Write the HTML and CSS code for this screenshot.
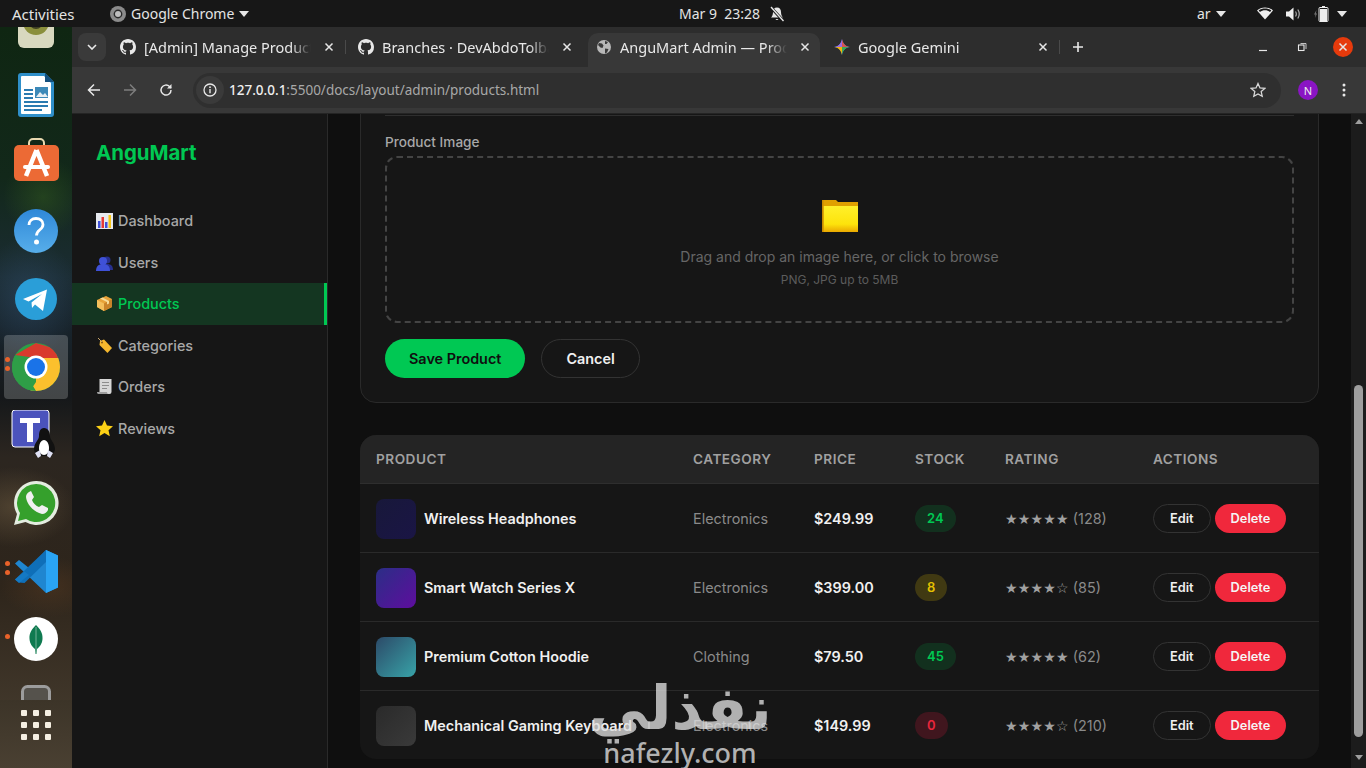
FILE: index.html
```html
<!DOCTYPE html>
<html lang="en">
<head>
    <meta charset="UTF-8">
    <meta name="viewport" content="width=device-width, initial-scale=1.0">
    <title>AnguMart Admin — Products</title>
    <link rel="stylesheet" href="styles.css">
</head>
<body>
<svg class="defs" width="0" height="0">
    <symbol id="octocat" viewBox="0 0 16 16"><path fill="#e8e8e8" d="M8 0C3.58 0 0 3.58 0 8c0 3.54 2.29 6.53 5.47 7.59.4.07.55-.17.55-.38 0-.19-.01-.82-.01-1.49-2.01.37-2.53-.49-2.69-.94-.09-.23-.48-.94-.82-1.13-.28-.15-.68-.52-.01-.53.63-.01 1.08.58 1.23.82.72 1.21 1.87.87 2.33.66.07-.52.28-.87.51-1.07-1.78-.2-3.64-.89-3.64-3.95 0-.87.31-1.59.82-2.15-.08-.2-.36-1.02.08-2.12 0 0 .67-.21 2.2.82.64-.18 1.32-.27 2-.27.68 0 1.36.09 2 .27 1.53-1.04 2.2-.82 2.2-.82.44 1.1.16 1.92.08 2.12.51.56.82 1.27.82 2.15 0 3.07-1.87 3.75-3.65 3.95.29.25.54.73.54 1.48 0 1.07-.01 1.93-.01 2.2 0 .21.15.46.55.38A8.013 8.013 0 0016 8c0-4.42-3.58-8-8-8z"/></symbol>
    <symbol id="close-x" viewBox="0 0 10 10"><path d="M1.500 1.500l7 7M8.500 1.500l-7 7" stroke="#e6e6e6" stroke-width="1.500" fill="none"/></symbol>
    <symbol id="caret" viewBox="0 0 10 6"><path d="M0 0h10L5 6z" fill="#e6e6e6"/></symbol>
</svg>

<div class="screen">
    <!-- gnome top bar -->
    <header class="topbar">
        <span class="tb-activities">Activities</span>
        <span class="tb-app">
            <svg width="16" height="16" viewBox="0 0 16 16"><circle cx="8" cy="8" r="8" fill="#8b8b8b"/><circle cx="8" cy="8" r="4.400" fill="#2a2a2a"/><circle cx="8" cy="8" r="3" fill="#bdbdbd"/></svg>
            Google Chrome
            <svg class="tb-caret" width="10" height="6"><use href="#caret"/></svg>
        </span>
        <span class="tb-clock">Mar 9&nbsp; 23:28</span>
        <svg class="tb-bell" width="16" height="16" viewBox="0 0 16 16"><path d="M8 1.500c-2.600 0-4 2-4 4.400 0 3-1 4.400-2 5.600h12c-1-1.200-2-2.600-2-5.600 0-2.400-1.400-4.400-4-4.400zM6.500 13a1.600 1.600 0 003 0z" fill="#e6e6e6"/><path d="M2 1.500l12 13" stroke="#171717" stroke-width="3"/><path d="M2 1l12.500 14" stroke="#e6e6e6" stroke-width="1.400"/></svg>
        <span class="tb-lang">ar <svg class="tb-caret" width="10" height="6"><use href="#caret"/></svg></span>
        <svg class="tb-wifi" width="16" height="13" viewBox="0 0 16 13"><path d="M8 12.500L0 3.500C2 1.500 5 .5 8 .5s6 1 8 3z" fill="#eee"/><path d="M1.600 3.600C3.400 2.200 5.600 1.600 8 1.600s4.600.6 6.400 2L13 5C11.600 3.900 9.900 3.300 8 3.300S4.400 3.900 3 5z" fill="#171717"/></svg>
        <svg class="tb-sound" width="15" height="14" viewBox="0 0 15 14"><path d="M0 4.500h3L7.500.5v13L3 9.500H0z" fill="#eee"/><path d="M9.500 4.500c1 1.500 1 3.500 0 5M11.800 2.500c1.800 2.800 1.800 6.200 0 9" stroke="#aaa" stroke-width="1.200" fill="none"/></svg>
        <svg class="tb-battery" width="15" height="16" viewBox="0 0 15 16"><path d="M2.500 4L0 8.500h1.500L1 12l2-4.500H1.800z" fill="#777"/><rect x="5" y="1.500" width="9" height="14" rx="1" fill="none" stroke="#eee" stroke-width="1"/><rect x="8" y="0" width="3" height="2" fill="#eee"/><rect x="6" y="3" width="7" height="12" fill="#eee"/></svg>
        <svg class="tb-caret tb-caret-last" width="10" height="6"><use href="#caret"/></svg>
    </header>

    <div class="desk">
        <!-- ubuntu dock -->
        <nav class="dock">
            <div class="dock-list">
                <div class="dock-slot">
                    <svg width="36" height="42" viewBox="0 0 36 42"><rect x="0" y="0" width="36" height="42" rx="6" fill="#d8d8bf"/><circle cx="18" cy="16" r="13" fill="#8a8f3c"/><circle cx="18" cy="16" r="7" fill="#3d3f22"/></svg>
                </div>
                <div class="dock-slot">
                    <svg width="36" height="44" viewBox="0 0 36 44"><path d="M3 0h24l9 9v32a3 3 0 01-3 3H3a3 3 0 01-3-3V3a3 3 0 013-3z" fill="#2f8fc9"/><path d="M4 3h22l7 7v30a1 1 0 01-1 1H4a1 1 0 01-1-1V4a1 1 0 011-1z" fill="#fff"/><path d="M27 0l9 9h-9z" fill="#14507e"/><path d="M6 17h9M6 21h9M6 25h9M6 29h24M6 33h24M6 37h18" stroke="#2a7ab0" stroke-width="2"/><rect x="17" y="14" width="13" height="11" fill="#3d89b8"/><path d="M18 24l4-5 3 3 2-2 3 4z" fill="#e9eef2"/></svg>
                </div>
                <div class="dock-slot">
                    <svg class="dock-bag" width="45" height="44" viewBox="0 0 45 44"><path d="M15 8V5a4 4 0 014-4h7a4 4 0 014 4v3" stroke="#e8d9b0" stroke-width="2" fill="none"/><rect x="0" y="7" width="45" height="36" rx="5" fill="#ec6a35"/><path d="M22.500 12L12 38M22.500 12L33 38" stroke="#fff" stroke-width="4.500"/><rect x="9" y="27" width="27" height="4" rx="2" fill="#fff"/></svg>
                </div>
                <div class="dock-slot">
                    <svg width="44" height="44" viewBox="0 0 44 44"><defs><linearGradient id="helpg" x1="0" y1="0" x2="0" y2="1"><stop offset="0" stop-color="#2f88d8"/><stop offset="1" stop-color="#57aeea"/></linearGradient></defs><circle cx="22" cy="22" r="22" fill="url(#helpg)"/><path d="M15 16c0-4 3-6.500 7-6.500s7 2.500 7 6c0 5.500-6.500 5-6.500 11" stroke="#fff" stroke-width="2.800" fill="none"/><circle cx="22.500" cy="33" r="2.500" fill="#fff"/></svg>
                </div>
                <div class="dock-slot">
                    <svg width="42" height="42" viewBox="0 0 42 42"><circle cx="21" cy="21" r="21" fill="#2a9ed8"/><path d="M8 21L32 11.500 28 33 20 26.500 17 30 16.500 24.500 27 16 13.500 23.500z" fill="#fff"/></svg>
                </div>
                <div class="dock-slot dock-active">
                    <i class="run-dot"></i><i class="run-dot"></i>
                    <svg width="48" height="48" viewBox="0 0 48 48"><defs><clipPath id="chromeclip"><circle cx="24" cy="24" r="24"/></clipPath></defs><g clip-path="url(#chromeclip)"><rect width="48" height="48" fill="#2e9e47"/><path d="M3 12L24 0l20 6 4 18-24-9z" fill="#d93a2d"/><path d="M24 15h24v33H18l6-9z" fill="#fbc02d"/><path d="M3 12l12 21 9 15H0V12z" fill="#2e9e47"/></g><circle cx="24" cy="24" r="11.500" fill="#fff"/><circle cx="24" cy="24" r="9" fill="#1a73e8"/></svg>
                </div>
                <div class="dock-slot">
                    <svg width="50" height="50" viewBox="0 0 50 50"><rect x="1" y="0" width="37" height="37" rx="3" fill="#4b53bc" stroke="#fff" stroke-width="1"/><path d="M9 8h20v5h-7v19h-6V13H9z" fill="#fff"/><path d="M33 18c-4 0-5 4-5 8 0 4-5 7-5 13 0 5 5 7 10 7s11-2 11-7c0-6-5-9-5-13 0-4-2-8-6-8z" fill="#111"/><path d="M33 30c-3 0-5 4-5 8s2 7 5 7 5-3 5-7-2-8-5-8z" fill="#fff"/><path d="M24 43l5-3 1 6-3 2zM42 43l-5-3-1 6 3 2z" fill="#dfe1f5"/></svg>
                </div>
                <div class="dock-slot">
                    <svg width="46" height="46" viewBox="0 0 46 46"><path d="M23 1a22 22 0 00-19 33L1 45l11.500-3A22 22 0 1023 1z" fill="#e4ece0"/><path d="M23 4a19 19 0 00-16 29l-2 8 8-2a19 19 0 1010-35z" fill="#35a02c"/><path d="M16 12c-2 1-3 3-3 5 1 8 8 15 16 17 3 0 5-2 6-4v-2l-6-3-3 2c-3-1-6-4-7-7l2-3-3-6z" fill="#f0f0f0"/></svg>
                </div>
                <div class="dock-slot">
                    <i class="run-dot"></i><i class="run-dot"></i>
                    <svg width="43" height="43" viewBox="0 0 43 43"><path d="M31 0l12 5.500v32L31 43 0 13.500 4 10l10 8z" fill="#1f86d0"/><path d="M0 29.500L31 0v12L9.500 33l-5.500-.5z" fill="#0f6fb8"/><path d="M31 43l12-5.500v-32L31 0z" fill="#2aa4f4"/><path d="M0 29.500L4 33l10-8-4.500-3.500z" fill="#1479c4"/></svg>
                </div>
                <div class="dock-slot">
                    <i class="run-dot run-dot-one"></i>
                    <svg width="44" height="44" viewBox="0 0 44 44"><circle cx="22" cy="22" r="22" fill="#fff"/><path d="M22 8c4 4 7 8 6.500 14-.4 5-3 8-5.500 10l-.5 5h-1l-.5-5c-2.500-2-5.100-5-5.500-10C15 16 18 12 22 8z" fill="#0f7a50"/><path d="M22 10v27" stroke="#b6d8c8" stroke-width=".6"/></svg>
                </div>
                <div class="dock-slot">
                    <svg width="30" height="44" viewBox="0 0 30 44"><rect x="1.500" y="1.500" width="27" height="41" rx="5" fill="#55524c" stroke="#9c9c9c" stroke-width="3"/></svg>
                </div>
            </div>
            <div class="dock-apps">
                <i></i><i></i><i></i><i></i><i></i><i></i><i></i><i></i><i></i>
            </div>
        </nav>

        <div class="browser">
            <!-- tab strip -->
            <div class="tabstrip">
                <span class="tab-search">
                    <svg width="10" height="6" viewBox="0 0 10 6"><path d="M1 1l4 4 4-4" stroke="#e8e8e8" stroke-width="1.600" fill="none"/></svg>
                </span>
                <div class="tab">
                    <svg class="tab-icon" width="16" height="16"><use href="#octocat"/></svg>
                    <span class="tab-title">[Admin] Manage Products</span>
                    <svg class="tab-close" width="10" height="10"><use href="#close-x"/></svg>
                </div>
                <div class="tab">
                    <svg class="tab-icon" width="16" height="16"><use href="#octocat"/></svg>
                    <span class="tab-title">Branches · DevAbdoTolba/AnguMart</span>
                    <svg class="tab-close" width="10" height="10"><use href="#close-x"/></svg>
                </div>
                <div class="tab tab-active">
                    <svg class="tab-icon" width="16" height="16" viewBox="0 0 16 16"><circle cx="8" cy="8" r="7" fill="#b8b8b8"/><path d="M3 4l3 .5 1.500 2-1 2.500-2-.5L2 6zM9 9.500l3.500.5L11 13.500l-2 1zM9 2l3 1-1.500 2H9z" fill="#3a3a3a"/></svg>
                    <span class="tab-title">AnguMart Admin — Products</span>
                    <svg class="tab-close" width="10" height="10"><use href="#close-x"/></svg>
                </div>
                <div class="tab tab-gemini">
                    <svg class="tab-icon" width="16" height="16" viewBox="0 0 16 16"><path d="M8 0c.6 4.500 3.500 7.400 8 8-4.500.6-7.400 3.500-8 8-.6-4.500-3.500-7.400-8-8 4.500-.6 7.400-3.500 8-8z" fill="#4f86ee"/><path d="M8 0c.6 4.500 3.500 7.400 8 8H8z" fill="#d9534f"/><path d="M0 8c4.500-.6 7.400-3.500 8-8v8z" fill="#9a6be0"/><path d="M8 16c.6-4.500 3.500-7.400 8-8H8z" fill="#3aa757"/><path d="M0 8c4.500.6 7.400 3.500 8 8V8z" fill="#f4b400"/></svg>
                    <span class="tab-title">Google Gemini</span>
                    <svg class="tab-close" width="10" height="10"><use href="#close-x"/></svg>
                </div>
                <svg class="tab-new" width="12" height="12" viewBox="0 0 12 12"><path d="M6 1v10M1 6h10" stroke="#e8e8e8" stroke-width="1.600"/></svg>
                <div class="win-controls">
                    <svg class="win-min" width="10" height="10" viewBox="0 0 10 10"><path d="M1 8.500h8" stroke="#e8e8e8" stroke-width="1.200"/></svg>
                    <svg width="10" height="10" viewBox="0 0 10 10"><rect x="1.500" y="3" width="5.500" height="5.500" fill="none" stroke="#e8e8e8" stroke-width="1.100"/><path d="M3.500 1.500H9V7" fill="none" stroke="#e8e8e8" stroke-width=".8"/></svg>
                    <span class="win-close"><svg width="10" height="10"><use href="#close-x"/></svg></span>
                </div>
            </div>

            <!-- toolbar -->
            <div class="toolbar">
                <svg class="tool" width="14" height="14" viewBox="0 0 14 14"><path d="M13 7H2M7 1.500L1.500 7 7 12.500" stroke="#e8e8e8" stroke-width="1.500" fill="none"/></svg>
                <svg class="tool" width="14" height="14" viewBox="0 0 14 14"><path d="M1 7h11M7 1.500L12.500 7 7 12.500" stroke="#7d7d7d" stroke-width="1.500" fill="none"/></svg>
                <svg class="tool" width="14" height="14" viewBox="0 0 14 14"><path d="M12 7a5 5 0 11-1.500-3.500L12 5" stroke="#e8e8e8" stroke-width="1.500" fill="none"/><path d="M12.500 1v4.500H8z" fill="#e8e8e8"/></svg>
                <div class="omnibox">
                    <span class="omni-info">
                        <svg width="14" height="14" viewBox="0 0 14 14"><circle cx="7" cy="7" r="6" fill="none" stroke="#e8e8e8" stroke-width="1.300"/><path d="M7 6v4.200" stroke="#e8e8e8" stroke-width="1.400"/><circle cx="7" cy="4.200" r=".9" fill="#e8e8e8"/></svg>
                    </span>
                    <span class="omni-url"><b>127.0.0.1</b>:5500/docs/layout/admin/products.html</span>
                    <svg class="omni-star" width="16" height="16" viewBox="0 0 16 16"><path d="M8 1.500l2 4.400 4.800.5-3.600 3.200 1 4.700L8 11.900l-4.200 2.400 1-4.700L1.200 6.400 6 5.900z" fill="none" stroke="#d8d8d8" stroke-width="1.300"/></svg>
                </div>
                <span class="avatar">N</span>
                <svg class="tool-menu" width="4" height="14" viewBox="0 0 4 14"><circle cx="2" cy="2" r="1.500" fill="#e8e8e8"/><circle cx="2" cy="7" r="1.500" fill="#e8e8e8"/><circle cx="2" cy="12" r="1.500" fill="#e8e8e8"/></svg>
            </div>

            <!-- page -->
            <div class="viewport">
                <aside class="sidebar">
                    <div class="logo">AnguMart</div>
                    <a class="nav-item" href="#">
                        <svg width="17" height="17" viewBox="0 0 17 17"><rect y="1" width="17" height="16" fill="#e6e9ee"/><rect x="2" y="9" width="2.500" height="7" fill="#3f51d8"/><rect x="5.500" y="5" width="2.500" height="11" fill="#e53935"/><rect x="9" y="10" width="2.500" height="6" fill="#3f51d8"/><rect x="12.500" y="3" width="2.500" height="13" fill="#f5c518"/></svg>
                        Dashboard
                    </a>
                    <a class="nav-item" href="#">
                        <svg width="17" height="17" viewBox="0 0 17 17"><circle cx="11" cy="6" r="3.500" fill="#27308f"/><path d="M5 16c0-4 2-6 6-6s6 2 6 6z" fill="#27308f"/><circle cx="7" cy="7" r="4" fill="#3f51d8"/><path d="M0 17c0-4.500 2.500-7 7-7s7 2.500 7 7z" fill="#3f51d8"/></svg>
                        Users
                    </a>
                    <a class="nav-item nav-active" href="#">
                        <svg width="17" height="17" viewBox="0 0 17 17"><path d="M1 5l9-4 6 3v8l-8 4-7-4z" fill="#e8a33a"/><path d="M1 5l7 3.500V16l-7-4z" fill="#f4bf5c"/><path d="M8 8.500L16 4v8l-8 4z" fill="#c9832a"/><path d="M4 3.500l7 3.500v2.500l2-1V6L6.500 2.500z" fill="#f7dc9a"/></svg>
                        Products
                    </a>
                    <a class="nav-item" href="#">
                        <svg width="17" height="17" viewBox="0 0 17 17"><path d="M4 4l4-1.500L16 11l-4.500 5L3.500 8z" fill="#f5b82e"/><circle cx="6" cy="5.500" r="1" fill="#8a5a10"/><path d="M6 5L2 1" stroke="#c9a66b" stroke-width="1" fill="none"/></svg>
                        Categories
                    </a>
                    <a class="nav-item" href="#">
                        <svg width="17" height="17" viewBox="0 0 17 17"><path d="M3.500 1H15.500V14a2 2 0 01-2 2H1.500c1.500 0 2-1 2-2z" fill="#d7d7d7"/><path d="M1 14h10c0 1 .5 2 1.500 2H2.500C1.500 16 1 15 1 14z" fill="#9d9d9d"/><path d="M6 4.500h7M6 7.500h7M6 10.500h5" stroke="#8d8d8d" stroke-width="1"/></svg>
                        Orders
                    </a>
                    <a class="nav-item" href="#">
                        <svg width="17" height="17" viewBox="0 0 17 17"><path d="M8.500 0l2.500 5.600 6 .6-4.500 4 1.300 6-5.300-3.100-5.300 3.100 1.300-6L0 6.200l6-.6z" fill="#fcd116"/></svg>
                        Reviews
                    </a>
                </aside>

                <main class="main">
                    <section class="form-card">
                        <div class="input-stub"></div>
                        <label class="form-label">Product Image</label>
                        <div class="dropzone">
                            <svg class="dz-folder" width="36" height="32" viewBox="0 0 36 32"><defs><linearGradient id="foldg" x1="0" y1="0" x2="0" y2="1"><stop offset="0" stop-color="#fff02a"/><stop offset=".7" stop-color="#fde30c"/><stop offset="1" stop-color="#eaa800"/></linearGradient></defs><path d="M0 0h14l2 2h20v30H0z" fill="#e0a000"/><path d="M1.500 6h34.500v26H1.500z" fill="url(#foldg)"/><path d="M0 0h1.500v32H0z" fill="#c98a00"/></svg>
                            <p class="dz-text">Drag and drop an image here, or click to browse</p>
                            <p class="dz-hint">PNG, JPG up to 5MB</p>
                        </div>
                        <div class="form-actions">
                            <button class="btn-save">Save Product</button>
                            <button class="btn-cancel">Cancel</button>
                        </div>
                    </section>

                    <section class="table-card">
                        <table class="products">
                            <thead>
                                <tr>
                                    <th class="col-product">Product</th>
                                    <th class="col-category">Category</th>
                                    <th class="col-price">Price</th>
                                    <th class="col-stock">Stock</th>
                                    <th class="col-rating">Rating</th>
                                    <th class="col-actions">Actions</th>
                                </tr>
                            </thead>
                            <tbody>
                                <tr>
                                    <td><div class="prod"><span class="thumb thumb-navy"></span>Wireless Headphones</div></td>
                                    <td class="cat">Electronics</td>
                                    <td class="price">$249.99</td>
                                    <td><span class="badge badge-ok">24</span></td>
                                    <td class="rating"><span class="stars">★★★★★</span> (128)</td>
                                    <td><div class="actions"><button class="btn-edit">Edit</button><button class="btn-delete">Delete</button></div></td>
                                </tr>
                                <tr>
                                    <td><div class="prod"><span class="thumb thumb-violet"></span>Smart Watch Series X</div></td>
                                    <td class="cat">Electronics</td>
                                    <td class="price">$399.00</td>
                                    <td><span class="badge badge-low">8</span></td>
                                    <td class="rating"><span class="stars">★★★★☆</span> (85)</td>
                                    <td><div class="actions"><button class="btn-edit">Edit</button><button class="btn-delete">Delete</button></div></td>
                                </tr>
                                <tr>
                                    <td><div class="prod"><span class="thumb thumb-teal"></span>Premium Cotton Hoodie</div></td>
                                    <td class="cat">Clothing</td>
                                    <td class="price">$79.50</td>
                                    <td><span class="badge badge-ok">45</span></td>
                                    <td class="rating"><span class="stars">★★★★★</span> (62)</td>
                                    <td><div class="actions"><button class="btn-edit">Edit</button><button class="btn-delete">Delete</button></div></td>
                                </tr>
                                <tr>
                                    <td><div class="prod"><span class="thumb thumb-grey"></span>Mechanical Gaming Keyboard</div></td>
                                    <td class="cat">Electronics</td>
                                    <td class="price">$149.99</td>
                                    <td><span class="badge badge-out">0</span></td>
                                    <td class="rating"><span class="stars">★★★★☆</span> (210)</td>
                                    <td><div class="actions"><button class="btn-edit">Edit</button><button class="btn-delete">Delete</button></div></td>
                                </tr>
                            </tbody>
                        </table>
                    </section>
                </main>

                <div class="scrollbar">
                    <i class="sb-up"></i>
                    <i class="sb-thumb"></i>
                    <i class="sb-down"></i>
                </div>
            </div>
        </div>
    </div>

    <!-- site watermark over the recording -->
    <div class="watermark">
        <span class="wm-ar" lang="ar" dir="rtl">نفذلي</span>
        <span class="wm-en">nafezly.com</span>
    </div>
</div>
</body>
</html>
```

FILE: styles.css
```css
* {
    box-sizing: border-box;
}

body {
    margin: 0;
    background-color: #111;
    font-family: Inter, "Noto Sans", sans-serif;
}

.defs {
    position: absolute;
}

svg {
    flex: none;
    display: block;
}

.screen {
    position: relative;
    width: 1366px;
    height: 768px;
    overflow: hidden;
    display: flex;
    flex-direction: column;
}

/* top bar */
.topbar {
    height: 27px;
    flex: none;
    display: flex;
    align-items: center;
    padding-left: 12px;
    background-color: #171717;
    color: #e4e4e4;
    font-family: "Noto Sans", sans-serif;
    font-size: 14px;
    white-space: nowrap;
}

.tb-activities {
    width: 62px;
    font-size: 15px;
}

.tb-app {
    width: 142px;
    display: flex;
    align-items: center;
    gap: 5px;
    margin-left: 36px;
}

.tb-caret {
    margin-left: 0;
}

.tb-clock {
    width: 81px;
    margin-left: 427px;
}

.tb-bell {
    margin-left: 9px;
}

.tb-lang {
    display: flex;
    align-items: center;
    gap: 5px;
    margin-left: 412px;
}

.tb-wifi {
    margin-left: 31px;
}

.tb-sound {
    margin-left: 13px;
}

.tb-battery {
    margin-left: 13px;
}

.tb-caret-last {
    margin-left: 8px;
}

.desk {
    flex: 1;
    display: flex;
    min-height: 0;
}

/* dock */
.dock {
    position: relative;
    width: 72px;
    flex: none;
    overflow: hidden;
    background:
        radial-gradient(ellipse 60px 40px at 20% 480px, rgba(120, 100, 70, 0.45), transparent),
        radial-gradient(ellipse 50px 30px at 70% 560px, rgba(90, 60, 35, 0.45), transparent),
        radial-gradient(ellipse 50px 60px at 40% 270px, rgba(50, 80, 110, 0.5), transparent),
        radial-gradient(ellipse 40px 40px at 60% 170px, rgba(50, 90, 30, 0.5), transparent),
        linear-gradient(180deg, #0f2612 0, #12281a 150px, #1b2c33 250px, #18242c 300px, #15181a 370px, #2c2620 430px, #2e251b 560px, #4a4032 741px);
}

.dock-list {
    margin-top: -34px;
}

.dock-slot {
    position: relative;
    height: 68px;
    display: flex;
    align-items: center;
    justify-content: center;
}

.dock-bag {
    margin-top: -6px;
}

.dock-active::before {
    content: "";
    position: absolute;
    left: 4px;
    top: 2px;
    width: 64px;
    height: 64px;
    border-radius: 4px;
    background-color: rgba(255, 255, 255, 0.2);
}

.dock-active svg {
    position: relative;
}

.run-dot {
    position: absolute;
    left: 4.500px;
    top: 24px;
    width: 5px;
    height: 5px;
    border-radius: 50%;
    background-color: #e9622a;
}

.run-dot + .run-dot {
    top: 33px;
}

.run-dot-one {
    top: 29px;
}

.dock-apps {
    position: absolute;
    left: 0;
    bottom: 0;
    width: 72px;
    height: 68px;
    padding: 10px 21px 22px;
    display: grid;
    grid-template-columns: repeat(3, 6px);
    grid-template-rows: repeat(3, 6px);
    gap: 6px;
    background: linear-gradient(180deg, #3c3428 0, #4a4032 100%);
}

.dock-apps i {
    border-radius: 1px;
    background-color: #f5efe2;
}

/* browser chrome */
.browser {
    flex: 1;
    min-width: 0;
    display: flex;
    flex-direction: column;
}

.tabstrip {
    height: 40px;
    flex: none;
    display: flex;
    align-items: flex-end;
    padding-left: 6px;
    background-color: #2d2d2d;
    color: #e8e8e8;
    font-family: "Noto Sans", sans-serif;
    font-size: 14.500px;
}

.tab-search {
    align-self: center;
    width: 28px;
    height: 28px;
    margin-right: 2px;
    display: flex;
    align-items: center;
    justify-content: center;
    border-radius: 8px;
    background-color: #3a3a3a;
}

.tab {
    width: 238px;
    height: 34px;
    flex: none;
    display: flex;
    align-items: center;
    padding: 0 12px 7px;
    position: relative;
    z-index: 0;
}

.tab::after {
    content: "";
    position: absolute;
    right: 0;
    top: 7px;
    width: 1px;
    height: 14px;
    background-color: #4a4a4a;
}

.tab-active::before {
    content: "";
    position: absolute;
    top: 0;
    bottom: 0;
    left: 4px;
    right: 2px;
    z-index: -1;
    border-radius: 10px 10px 0 0;
    background-color: #383838;
}

.tab-active::after,
.tab:nth-of-type(2)::after {
    display: none;
}

.tab-title {
    width: 168px;
    margin-left: 8px;
    white-space: nowrap;
    overflow: hidden;
    -webkit-mask-image: linear-gradient(90deg, #000 88%, transparent 100%);
    mask-image: linear-gradient(90deg, #000 88%, transparent 100%);
}

.tab-close {
    margin-left: 13px;
}

.tab-new {
    margin: 0 0 14px 12px;
}

.win-controls {
    margin-left: auto;
    margin-right: 13px;
    margin-bottom: 10px;
    display: flex;
    align-items: center;
    gap: 26px;
}

.win-min {
    margin-right: 3px;
}

.win-close {
    width: 20px;
    height: 20px;
    display: flex;
    align-items: center;
    justify-content: center;
    border-radius: 50%;
    background-color: #e63a0c;
}

.toolbar {
    height: 47px;
    flex: none;
    display: flex;
    align-items: center;
    padding-left: 15px;
    background-color: #383838;
    border-bottom: 1px solid #242424;
}

.tool {
    margin-right: 22px;
}

.omnibox {
    width: 1088px;
    height: 35px;
    margin-left: -2px;
    display: flex;
    align-items: center;
    padding: 0 15px 0 3px;
    border-radius: 18px;
    background-color: #2f2f2f;
}

.omni-info {
    width: 28px;
    height: 28px;
    display: flex;
    align-items: center;
    justify-content: center;
    border-radius: 50%;
    background-color: #3a3a3a;
}

.omni-url {
    margin-left: 5px;
    font-family: "Noto Sans", sans-serif;
    font-size: 13.500px;
    color: #a8a8a8;
}

.omni-url b {
    font-weight: 500;
    color: #eee;
}

.omni-star {
    margin-left: auto;
}

.avatar {
    width: 20px;
    height: 20px;
    margin-left: 17px;
    display: flex;
    align-items: center;
    justify-content: center;
    border-radius: 50%;
    background-color: #8a14c4;
    color: #eee;
    font-family: "Noto Sans", sans-serif;
    font-size: 11px;
}

.tool-menu {
    margin-left: 24px;
}

/* page */
.viewport {
    flex: 1;
    min-height: 0;
    display: flex;
    background-color: #0f0f0f;
}

.sidebar {
    width: 256px;
    flex: none;
    background-color: #161616;
    border-right: 1px solid #2a2a2a;
}

.logo {
    margin: 26px 24px 34px;
    font-size: 20.400px;
    line-height: 26px;
    font-weight: 700;
    color: #00c853;
}

.nav-item {
    height: 41.500px;
    display: flex;
    align-items: center;
    gap: 5px;
    padding: 0 24px;
    font-size: 14.400px;
    font-weight: 500;
    color: #a8a8a8;
    text-decoration: none;
}

.nav-active {
    color: #00c853;
    background-color: #143621;
    border-right: 3px solid #00c853;
}

.main {
    flex: 1;
    min-width: 0;
    overflow: hidden;
    padding: 0 32px;
}

.form-card {
    margin-top: -40px;
    padding: 24px;
    background-color: #161616;
    border: 1px solid #2a2a2a;
    border-radius: 16px;
}

.input-stub {
    height: 17px;
    margin-bottom: 18px;
    border-bottom: 1px solid #2e2e2e;
}

.form-label {
    display: block;
    margin-bottom: 5px;
    font-size: 13.600px;
    font-weight: 500;
    line-height: 17px;
    color: #a8a8a8;
}

.dropzone {
    height: 167px;
    display: flex;
    flex-direction: column;
    align-items: center;
    padding-top: 42px;
    border: 2px dashed #444;
    border-radius: 12px;
}

.dz-text {
    margin: 16px 0 0;
    font-size: 14px;
    line-height: 18px;
    color: #666;
}

.dz-hint {
    margin: 6px 0 0;
    font-size: 12px;
    line-height: 15px;
    color: #5c5c5c;
}

.form-actions {
    display: flex;
    gap: 16px;
    margin-top: 16px;
}

button {
    font-family: Inter, sans-serif;
    cursor: pointer;
    border-radius: 999px;
}

.btn-save {
    height: 39px;
    padding: 0 24px;
    border: none;
    background-color: #00c853;
    color: #0f0f0f;
    font-size: 14.400px;
    font-weight: 600;
}

.btn-cancel {
    height: 39px;
    padding: 0 24px;
    border: 1px solid #333;
    background-color: transparent;
    color: #f0f0f0;
    font-size: 14.400px;
    font-weight: 600;
}

.table-card {
    margin-top: 32px;
    overflow: hidden;
    border-radius: 16px;
    background-color: #161616;
}

.products {
    width: 100%;
    table-layout: fixed;
    border-collapse: collapse;
}

.products th {
    height: 48px;
    padding: 0 16px;
    text-align: left;
    text-transform: uppercase;
    font-size: 13.600px;
    font-weight: 600;
    letter-spacing: 0.5px;
    color: #a0a0a0;
    background-color: #242424;
    border-bottom: 1px solid #2e2e2e;
}

.col-product {
    width: 317px;
}

.col-category {
    width: 121px;
}

.col-price {
    width: 101px;
}

.col-stock {
    width: 90px;
}

.col-rating {
    width: 148px;
}

.products td {
    height: 69px;
    padding: 2px 16px 0;
    border-bottom: 1px solid #2a2a2a;
    font-size: 14.400px;
}

.products tr:last-child td {
    border-bottom: none;
}

.prod {
    display: flex;
    align-items: center;
    gap: 8px;
    font-weight: 600;
    color: #f0f0f0;
    white-space: nowrap;
}

.thumb {
    width: 40px;
    height: 40px;
    flex: none;
    border-radius: 8px;
}

.thumb-navy {
    background: linear-gradient(135deg, #18183a, #1a1545);
}

.thumb-violet {
    background: linear-gradient(135deg, #2b2e86, #5e0d9e);
}

.thumb-teal {
    background: linear-gradient(135deg, #2c4a68, #38a3a8);
}

.thumb-grey {
    background: linear-gradient(135deg, #2a2a2a, #3a3a3a);
}

.products .cat {
    color: #8a8a8a;
}

.products .price {
    font-weight: 600;
    color: #f0f0f0;
}

.badge {
    display: inline-block;
    padding: 5px 12px;
    border-radius: 999px;
    font-size: 13px;
    line-height: 17px;
    font-weight: 600;
}

.badge-ok {
    color: #00c853;
    background-color: rgba(0, 200, 83, 0.15);
}

.badge-low {
    color: #e5c100;
    background-color: rgba(255, 214, 0, 0.18);
}

.badge-out {
    color: #e8263c;
    background-color: rgba(255, 23, 68, 0.18);
}

.products .rating {
    color: #8a8a8a;
    white-space: nowrap;
}

.stars {
    font-family: "DejaVu Sans", sans-serif;
    font-size: 14px;
    letter-spacing: 0.200px;
    color: #a0a0a0;
}

.actions {
    display: flex;
    gap: 4px;
}

.btn-edit {
    height: 29px;
    padding: 0 16px;
    border: 1px solid #333;
    background-color: transparent;
    color: #f0f0f0;
    font-size: 12.800px;
    font-weight: 600;
}

.btn-delete {
    height: 29px;
    padding: 0 16px;
    border: none;
    background-color: #f0283c;
    color: #f5f5f5;
    font-size: 12.800px;
    font-weight: 600;
}

/* scrollbar */
.scrollbar {
    width: 15px;
    flex: none;
    display: flex;
    flex-direction: column;
    align-items: center;
    padding-top: 5px;
    background-color: #1c1c1c;
}

.sb-up {
    width: 0;
    height: 0;
    border: 4.500px solid transparent;
    border-top: none;
    border-bottom: 5px solid #9e9e9e;
}

.sb-thumb {
    width: 9px;
    height: 352px;
    margin-top: 261px;
    border-radius: 5px;
    background-color: #9e9e9e;
}

.sb-down {
    width: 0;
    height: 0;
    margin-top: 18px;
    border: 4.500px solid transparent;
    border-bottom: none;
    border-top: 5px solid #9e9e9e;
}

/* watermark */
.watermark {
    position: absolute;
    left: 587px;
    top: 668px;
    width: 186px;
    display: flex;
    flex-direction: column;
    align-items: center;
    color: rgba(222, 222, 222, 0.78);
    pointer-events: none;
}

.wm-ar {
    font-family: "DejaVu Sans", sans-serif;
    font-size: 60px;
    line-height: 80px;
    font-weight: 700;
}

.wm-en {
    margin-top: -11px;
    font-family: "Noto Sans", sans-serif;
    font-size: 27px;
    line-height: 32px;
    font-weight: 500;
}
```
